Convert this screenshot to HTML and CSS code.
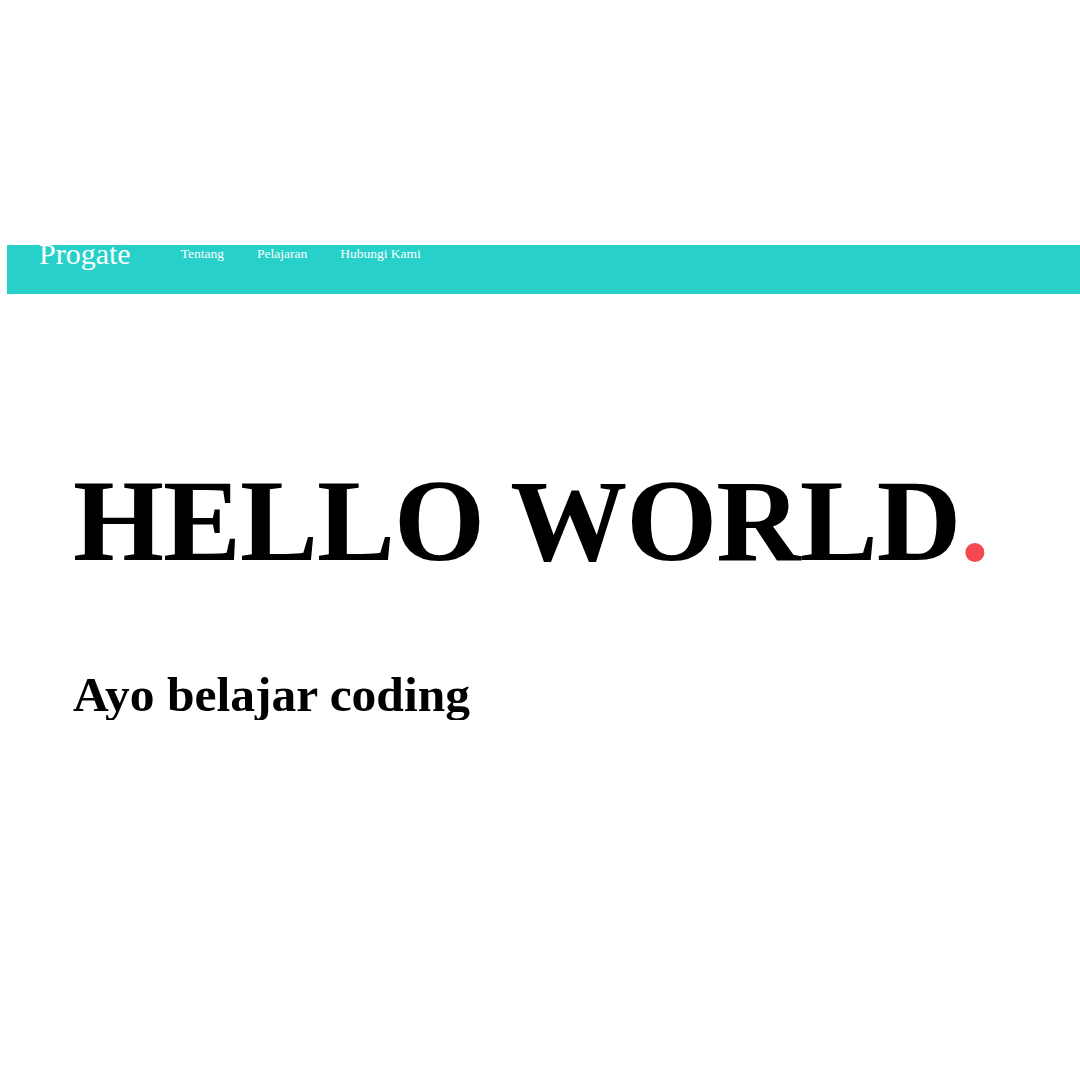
FILE: index.html
```html
<!DOCTYPE html>
<html lang="id">
<head>
<meta charset="utf-8">
<title>Progate</title>
<link rel="stylesheet" href="styles.css">
</head>
<body>
<div class="page">
  <header class="header">
    <div class="logo">Progate</div>
    <nav class="nav">
      <a class="nav-link" href="#">Tentang</a>
      <a class="nav-link" href="#">Pelajaran</a>
      <a class="nav-link" href="#">Hubungi Kami</a>
    </nav>
  </header>
  <main class="hero">
    <h1 class="hero-title">HELLO WORLD<span class="dot">.</span></h1>
    <h2 class="hero-sub">Ayo belajar coding</h2>
  </main>
</div>
</body>
</html>
```
FILE: styles.css
```css
html, body {
  margin: 0;
  padding: 0;
  background: #ffffff;
}
body {
  font-family: "Liberation Serif", "Times New Roman", serif;
  color: #000;
}
.page {
  padding-top: 245px;
}
.header {
  margin-left: 7px;
  height: 49px;
  background: #27d0c9;
  display: flex;
  align-items: flex-start;
  padding-left: 32px;
}
.logo {
  font-size: 30px;
  line-height: 1;
  color: #ffffff;
  margin-top: -6px;
}
.nav {
  display: flex;
  gap: 33px;
  margin-left: 50px;
  margin-top: 2px;
}
.nav-link {
  font-size: 13.5px;
  line-height: 1;
  color: #ffffff;
  text-decoration: none;
}
.hero {
  padding-left: 73px;
  padding-top: 168px;
}
.hero-title {
  margin: 0;
  font-size: 117px;
  line-height: 1;
  font-weight: bold;
  letter-spacing: -1px;
}
.dot {
  color: #f5474f;
}
.hero-sub {
  margin: 91px 0 0;
  font-size: 49.5px;
  line-height: 1;
  font-weight: bold;
}
```
